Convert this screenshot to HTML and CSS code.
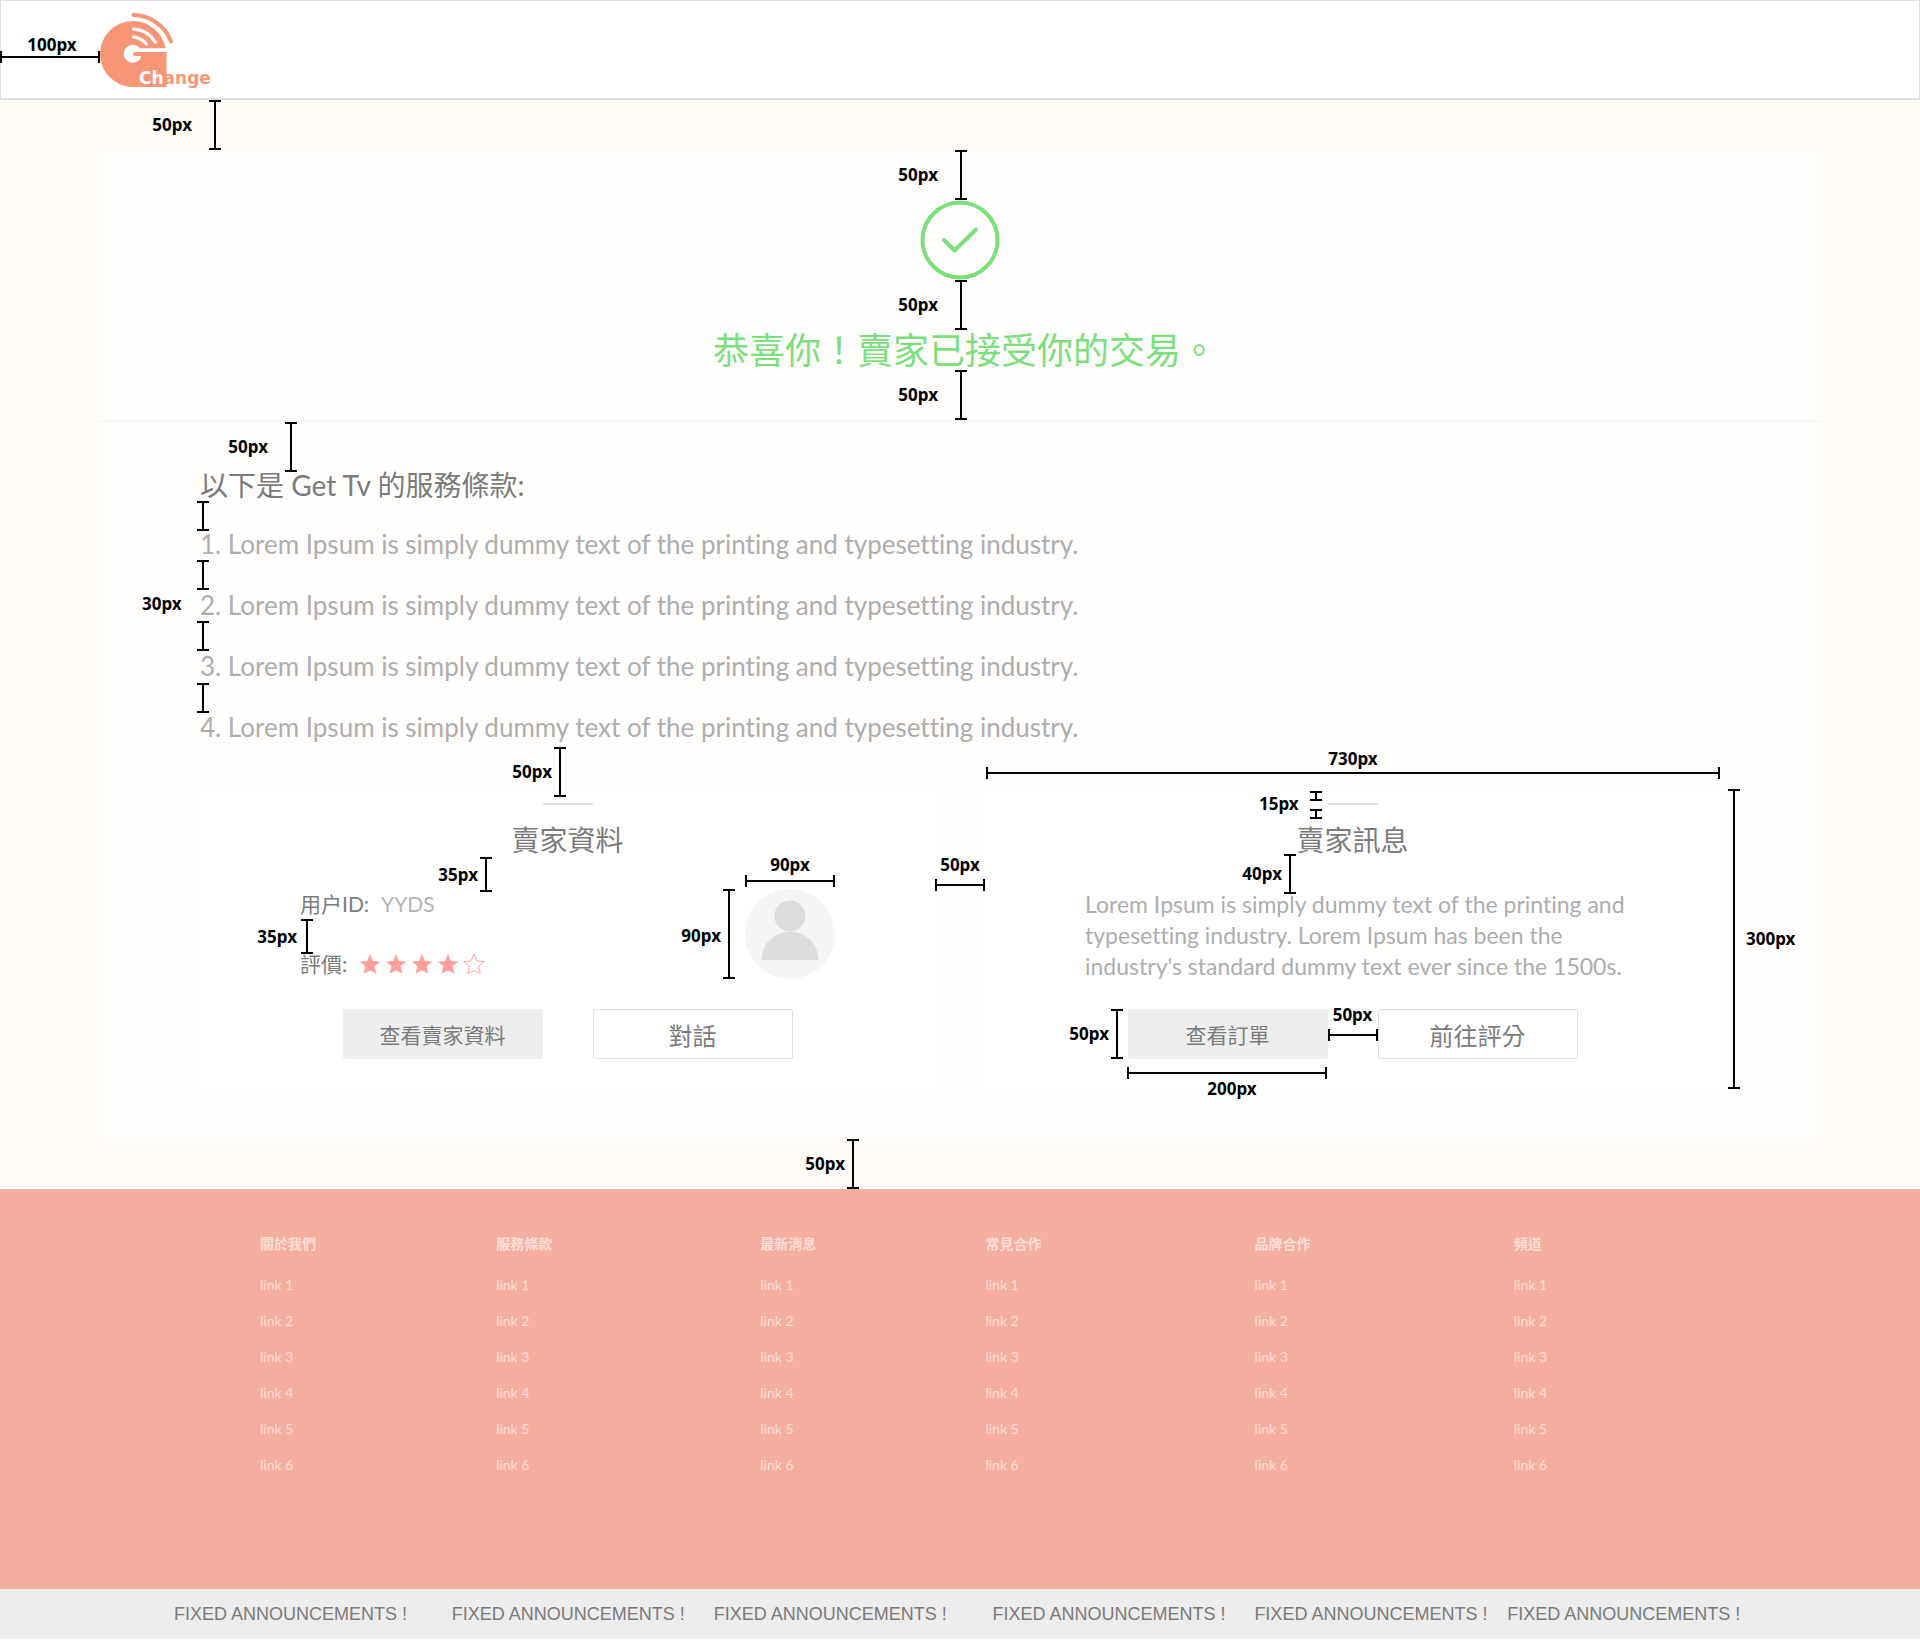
FILE: index.html
```html
<!DOCTYPE html>
<html lang="zh-Hant">
<head>
<meta charset="utf-8">
<meta name="viewport" content="width=device-width, initial-scale=1">
<title>Get Tv</title>
<link rel="stylesheet" href="styles.css">
</head>
<body>
<svg class="sprite" aria-hidden="true">
  <symbol id="star" viewBox="0 0 22 22"><path d="M11 1 13.9 8 21.2 8.5 15.6 13.3 17.4 20.6 11 17.6 4.600 20.600 6.400 13.300 0.800 8.500 8.100 8Z"/></symbol>
</svg>

<header class="site-header">
  <a class="logo" href="#" aria-label="Change">
    <svg width="114" height="80" viewBox="0 0 114 80">
      <path d="M33 11A33 33 0 0 0 33 77H66.500V42H35A2 2 0 0 0 35 46H41.500A9 9 0 1 1 40 38.300H65.500A33 33 0 0 0 33 11Z" fill="#f69676"/>
      <g fill="none" stroke-linecap="round" stroke-width="4">
        <path d="M33.500 5A41 41 0 0 1 71 31.500" stroke="#f69676"/>
        <path d="M33.500 19A28 28 0 0 1 55.500 32.500" stroke="#fff" stroke-width="3"/>
        <path d="M33.500 27A20 20 0 0 1 46.500 34" stroke="#fff" stroke-width="3"/>
      </g>
      <text class="logo-text" x="39" y="74"><tspan fill="#fff">Ch</tspan><tspan fill="#f69676">ange</tspan></text>
    </svg>
  </a>
  <span class="dim dim-h dim-header"><b>100px</b></span>
</header>

<main class="content">
  <span class="dim dim-v far dim-top"><b>50px</b></span>
  <article class="card">
    <section class="hero">
      <svg class="hero-icon" width="80" height="80" viewBox="0 0 80 80" fill="none" stroke="#7be07b" stroke-width="4" stroke-linecap="round" stroke-linejoin="round" aria-hidden="true">
        <circle cx="40" cy="40" r="37.500"/>
        <path d="M24 40 34.500 50.500 56 29.500"/>
      </svg>
      <h1 class="hero-title">恭喜你！賣家已接受你的交易。</h1>
      <span class="dim dim-v far dim-hero-a"><b>50px</b></span>
      <span class="dim dim-v far dim-hero-b"><b>50px</b></span>
      <span class="dim dim-v far dim-hero-c"><b>50px</b></span>
    </section>

    <section class="terms">
      <h2 class="terms-title">以下是 Get Tv 的服務條款:</h2>
      <ol class="terms-list">
        <li>1. Lorem Ipsum is simply dummy text of the printing and typesetting industry.</li>
        <li>2. Lorem Ipsum is simply dummy text of the printing and typesetting industry.</li>
        <li>3. Lorem Ipsum is simply dummy text of the printing and typesetting industry.</li>
        <li>4. Lorem Ipsum is simply dummy text of the printing and typesetting industry.</li>
      </ol>
      <span class="dim dim-v far dim-terms"><b>50px</b></span>
      <span class="dim dim-v dim-gap-a"></span>
      <span class="dim dim-v dim-gap-b"></span>
      <span class="dim dim-v dim-gap-c"></span>
      <span class="dim dim-v dim-gap-d"></span>
      <b class="dim-label dim-gap-label">30px</b>
    </section>

    <div class="panels">
      <section class="panel">
        <h2 class="panel-title">賣家資料</h2>
        <div class="seller">
          <dl class="facts">
            <div><dt>用户ID:</dt><dd>YYDS</dd></div>
            <div><dt>評價:</dt>
              <dd class="stars" role="img" aria-label="4 / 5">
                <svg><use href="#star"/></svg><svg><use href="#star"/></svg><svg><use href="#star"/></svg><svg><use href="#star"/></svg><svg class="empty"><use href="#star"/></svg>
              </dd>
            </div>
          </dl>
          <svg class="avatar" width="90" height="90" viewBox="0 0 90 90" aria-hidden="true">
            <circle cx="45" cy="45" r="45" fill="#f5f5f5"/>
            <circle cx="45" cy="27" r="15.500" fill="#dcdcdc"/>
            <path d="M16.500 71A28.500 28.500 0 0 1 73.500 71Z" fill="#dcdcdc"/>
          </svg>
        </div>
        <div class="actions">
          <button class="btn btn-fill" type="button">查看賣家資料</button>
          <button class="btn btn-line" type="button">對話</button>
        </div>
        <span class="dim dim-v dim-panel-top"><b>50px</b></span>
        <span class="dim dim-v dim-title-gap"><b>35px</b></span>
        <span class="dim dim-v dim-row-gap"><b>35px</b></span>
        <span class="dim dim-v dim-avatar-h"><b>90px</b></span>
        <span class="dim dim-h dim-avatar-w"><b>90px</b></span>
        <span class="dim dim-h dim-panel-gap"><b>50px</b></span>
      </section>

      <section class="panel">
        <h2 class="panel-title">賣家訊息</h2>
        <p class="message">Lorem Ipsum is simply dummy text of the printing and typesetting industry. Lorem Ipsum has been the industry's standard dummy text ever since the 1500s.</p>
        <div class="actions">
          <button class="btn btn-fill" type="button">查看訂單</button>
          <button class="btn btn-line" type="button">前往評分</button>
        </div>
        <span class="dim dim-h dim-panel-w"><b>730px</b></span>
        <span class="dim dim-v dim-rule-a"></span>
        <span class="dim dim-v dim-rule-b"></span>
        <b class="dim-label dim-rule-label">15px</b>
        <span class="dim dim-v dim-message"><b>40px</b></span>
        <span class="dim dim-v dim-btn-h"><b>50px</b></span>
        <span class="dim dim-h dim-btn-gap"><b>50px</b></span>
        <span class="dim dim-h below dim-btn-w"><b>200px</b></span>
        <span class="dim dim-v after dim-panel-h"><b>300px</b></span>
      </section>
    </div>
  </article>
  <span class="dim dim-v dim-bottom"><b>50px</b></span>
</main>

<footer class="site-footer">
  <nav><h3>關於我們</h3><a href="#">link 1</a><a href="#">link 2</a><a href="#">link 3</a><a href="#">link 4</a><a href="#">link 5</a><a href="#">link 6</a></nav>
  <nav><h3>服務條款</h3><a href="#">link 1</a><a href="#">link 2</a><a href="#">link 3</a><a href="#">link 4</a><a href="#">link 5</a><a href="#">link 6</a></nav>
  <nav><h3>最新消息</h3><a href="#">link 1</a><a href="#">link 2</a><a href="#">link 3</a><a href="#">link 4</a><a href="#">link 5</a><a href="#">link 6</a></nav>
  <nav><h3>常見合作</h3><a href="#">link 1</a><a href="#">link 2</a><a href="#">link 3</a><a href="#">link 4</a><a href="#">link 5</a><a href="#">link 6</a></nav>
  <nav><h3>品牌合作</h3><a href="#">link 1</a><a href="#">link 2</a><a href="#">link 3</a><a href="#">link 4</a><a href="#">link 5</a><a href="#">link 6</a></nav>
  <nav><h3>頻道</h3><a href="#">link 1</a><a href="#">link 2</a><a href="#">link 3</a><a href="#">link 4</a><a href="#">link 5</a><a href="#">link 6</a></nav>
</footer>

<div class="ticker">
  <span>FIXED ANNOUNCEMENTS !</span>
  <span>FIXED ANNOUNCEMENTS !</span>
  <span>FIXED ANNOUNCEMENTS !</span>
  <span>FIXED ANNOUNCEMENTS !</span>
  <span>FIXED ANNOUNCEMENTS !</span>
  <span>FIXED ANNOUNCEMENTS !</span>
</div>
</body>
</html>
```
FILE: styles.css
```css
* { box-sizing: border-box; }

body {
  margin: 0;
  background: #fffcf7;
  color: #7b7b7b;
  font-family: Lato, "Noto Sans CJK TC", sans-serif;
  font-variant-ligatures: none;
}

h1, h2, h3, p, dl, dd, ol { margin: 0; padding: 0; font-weight: 400; }
ol { list-style: none; }
a { color: inherit; text-decoration: none; }
.sprite { display: none; }

/* Header */
.site-header {
  position: relative;
  display: flex;
  min-height: 100px;
  padding: 9px 99px 8px;
  background: #fff;
  border: 1px solid #ddd;
  border-bottom-width: 2px;
}
.logo svg { display: block; }
.logo-text { font: bold 17px "DejaVu Sans", sans-serif; }

/* Main card */
.content { position: relative; padding: 50px 100px; }
.card { background: #fffefd; padding-bottom: 50px; }

.hero {
  position: relative;
  display: flex;
  flex-direction: column;
  align-items: center;
  gap: 50px;
  padding: 50px 0;
  border-bottom: 2px solid #f6f6f5;
}
.hero-title { padding-left: 10px; color: #7be07b; font-size: 36px; line-height: 40px; }

.terms { position: relative; padding: 48px 100px 46px; }
.terms-title { font-size: 28px; line-height: 30px; }
.terms-list {
  display: grid;
  gap: 30px;
  padding-top: 29px;
  color: #adadad;
  font-size: 26px;
  line-height: 31px;
}

/* Panels */
.panels {
  display: grid;
  grid-template-columns: 1fr 1fr;
  gap: 50px;
  padding: 0 100px;
}
.panel {
  position: relative;
  display: flex;
  flex-direction: column;
  min-height: 300px;
  padding: 14px 100px 30px;
  background: #fff;
}
.panel-title {
  margin-bottom: 32px;
  font-size: 28px;
  line-height: 34px;
  text-align: center;
}
.panel-title::before {
  content: "";
  display: block;
  width: 50px;
  height: 2px;
  margin: 0 auto 18px;
  background: #e2e2e2;
}
.seller { display: flex; justify-content: space-between; }
.facts { display: grid; gap: 30px; font-size: 21px; line-height: 30px; }
.facts div { display: flex; gap: 12px; }
.facts dd { color: #b3b3b3; }
.facts .stars { display: flex; align-items: center; gap: 4px; }
.stars svg { width: 22px; height: 22px; fill: #ff9f9b; }
.stars .empty { fill: none; stroke: #ff9f9b; stroke-width: 1px; overflow: visible; }
.message { margin-right: -16px; color: #adadad; font-size: 23px; line-height: 31px; }

.actions { display: flex; justify-content: center; gap: 50px; margin-top: auto; }
.btn {
  width: 200px;
  height: 50px;
  padding: 0;
  border: 0;
  border-radius: 2px;
  color: #7b7b7b;
  font-family: inherit;
}
.btn-fill { background: #eee; font-size: 21px; }
.btn-line { background: #fff; border: 1px solid #e0e0e0; font-size: 24px; }

/* Footer */
.site-footer {
  display: grid;
  grid-template-columns: 236fr 264fr 225fr 269fr 259fr 406fr;
  min-height: 400px;
  padding: 46px 0 0 260px;
  background: #f5af9f;
  color: #fbded7;
  font-size: 14px;
}
.site-footer nav { display: flex; flex-direction: column; align-items: flex-start; }
.site-footer h3 { margin-bottom: 14px; font-size: 14px; font-weight: 700; line-height: 18px; }
.site-footer a { line-height: 36px; }

.ticker {
  display: grid;
  grid-template-columns: 278fr 262fr 279fr 262fr 253fr 413fr;
  padding-left: 174px;
  background: #ececec;
  font: 18px/50px "Liberation Sans", sans-serif;
}

/* Dimension marks */
.dim { position: absolute; border: 0 solid #000; }
.dim-v {
  width: 12px;
  border-width: 2px 0;
  background: linear-gradient(#000, #000) center / 2px 100% no-repeat;
}
.dim-h {
  height: 12px;
  border-width: 0 2px;
  background: linear-gradient(#000, #000) center / 100% 2px no-repeat;
}
.dim b, .dim-label {
  position: absolute;
  color: #000;
  font: bold 17px/20px "Noto Sans", sans-serif;
  white-space: nowrap;
}
.dim-v b { top: 0; bottom: 0; right: calc(100% + 2px); display: flex; align-items: center; }
.dim-v.far b { right: calc(100% + 17px); }
.dim-v.after b { right: auto; left: calc(100% + 6px); }
.dim-h b { left: 0; right: 0; bottom: 100%; display: flex; justify-content: center; }
.dim-h.below b { top: 100%; bottom: auto; }

.dim-header { left: -1px; top: 50px; width: 100px; }
.dim-header b { bottom: calc(100% - 4px); padding-left: 4px; }
.dim-top { left: 209px; top: 0; height: 50px; }
.dim-bottom { left: 847px; bottom: 0; height: 50px; }

.dim-hero-a, .dim-hero-b, .dim-hero-c { left: calc(50% - 5px); height: 50px; }
.dim-hero-a { top: 0; }
.dim-hero-b { top: 130px; }
.dim-hero-c { bottom: 0; }

.dim-terms { left: 185px; top: 0; height: 50px; }
.dim-gap-a, .dim-gap-b, .dim-gap-c, .dim-gap-d { left: 97px; height: 30px; }
.dim-gap-a { top: 79px; }
.dim-gap-b { top: 138px; }
.dim-gap-c { top: 199px; }
.dim-gap-d { top: 261px; }
.dim-gap-label { left: 42px; top: 172px; }

.dim-panel-top { left: 354px; top: -42px; height: 50px; }
.dim-title-gap { left: 280px; top: 68px; height: 35px; }
.dim-row-gap { left: 101px; top: 130px; height: 35px; }
.dim-row-gap b { right: calc(100% + 4px); }
.dim-avatar-h { right: 200px; top: 100px; height: 90px; }
.dim-avatar-h b { padding-top: 4px; }
.dim-avatar-w { right: 100px; top: 86px; width: 90px; }
.dim-panel-gap { left: 100%; top: 90px; width: 50px; }
.dim-panel-gap b { bottom: calc(100% + 4px); }

.dim-panel-w { left: 1px; right: 0; top: -22px; }
.dim-panel-w b { bottom: calc(100% - 2px); }
.dim-rule-a, .dim-rule-b { left: 325px; height: 10px; }
.dim-rule-a { top: 2px; }
.dim-rule-b { top: 20px; }
.dim-rule-label { left: 274px; top: 5px; }
.dim-message { left: 299px; top: 65px; height: 40px; }
.dim-btn-h { left: 126px; bottom: 30px; height: 50px; }
.dim-btn-gap { left: calc(50% - 25px); bottom: 48px; width: 50px; }
.dim-btn-gap b { bottom: calc(100% + 4px); }
.dim-btn-w { left: 142px; bottom: 10px; width: 200px; }
.dim-btn-w b { padding-left: 10px; }
.dim-panel-h { left: calc(100% + 8px); top: 0; height: 300px; }
```
